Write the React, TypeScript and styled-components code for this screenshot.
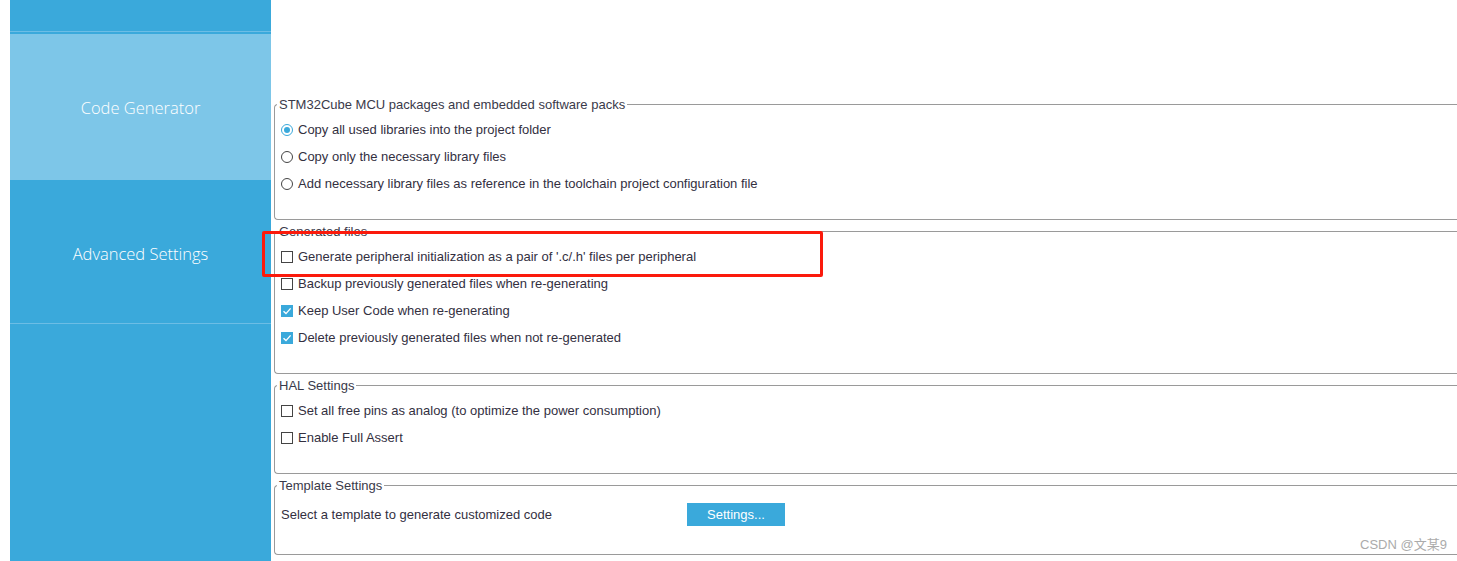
import React from "react";
import styled, { createGlobalStyle } from "styled-components";

const Global = createGlobalStyle`
  html, body { margin: 0; padding: 0; background: #fff; }
  body { font-family: "Liberation Sans", Arial, sans-serif; }
`;

const BLUE = "#3aa9db";
const LIGHT = "#7dc6e8";
const LINE = "#6cbde5";

const Page = styled.div`
  position: relative;
  display: flex;
  width: 1457px;
  height: 561px;
  padding-left: 10px;
  box-sizing: border-box;
  overflow: hidden;
  background: #fff;
`;

const Sidebar = styled.nav`
  width: 261px;
  flex: none;
  display: flex;
  flex-direction: column;
  background: ${BLUE};
`;

const NavItem = styled.div<{ $h: number; $active?: boolean; $line?: boolean; $gap?: number; $shift?: number }>`
  height: ${(p) => p.$h}px;
  flex: none;
  box-sizing: border-box;
  display: flex;
  align-items: center;
  justify-content: center;
  padding-top: ${(p) => p.$shift ?? 0}px;
  margin-bottom: ${(p) => p.$gap ?? 0}px;
  background: ${(p) => (p.$active ? LIGHT : BLUE)};
  border-bottom: ${(p) => (p.$line ? `1px solid ${LINE}` : "none")};
  color: #fff;
  font-family: "Open Sans", "Liberation Sans", Arial, sans-serif;
  font-size: 16.5px;
  font-weight: 300;
`;

const Main = styled.main`
  flex: 1;
  min-width: 0;
  padding: 95px 0 0 3px;
  display: flex;
  flex-direction: column;
  gap: 2px;
`;

const Group = styled.fieldset<{ $h: number }>`
  margin: 0;
  height: ${(p) => p.$h}px;
  box-sizing: border-box;
  border: 1px solid #9a9a9a;
  border-right: none;
  border-radius: 4px 0 0 4px;
  padding: 0 0 0 6px;
  min-width: 0;
`;

const Legend = styled.legend`
  margin-left: -4px;
  padding: 2px 2px 0;
  font-size: 13px;
  line-height: 16px;
  color: #3a3a4a;
`;

const Rows = styled.div<{ $top?: number }>`
  display: flex;
  flex-direction: column;
  padding-top: ${(p) => p.$top ?? 3}px;
`;

const Row = styled.label`
  height: 27px;
  display: flex;
  align-items: center;
  gap: 5px;
  font-size: 13px;
  color: #33303f;
  white-space: nowrap;
`;

const Radio = styled.span<{ $on?: boolean }>`
  width: 12px;
  height: 12px;
  box-sizing: border-box;
  border-radius: 50%;
  border: 1px solid ${(p) => (p.$on ? BLUE : "#444")};
  display: flex;
  align-items: center;
  justify-content: center;
  background: #fff;
  &::after {
    content: "";
    width: 6px;
    height: 6px;
    border-radius: 50%;
    background: ${(p) => (p.$on ? BLUE : "transparent")};
  }
`;

const Check = styled.span<{ $on?: boolean }>`
  width: 12px;
  height: 12px;
  box-sizing: border-box;
  border: 1px solid ${(p) => (p.$on ? BLUE : "#444")};
  background: ${(p) => (p.$on ? BLUE : "#fff")};
  display: flex;
  align-items: center;
  justify-content: center;
`;

const TemplateRow = styled.div`
  display: flex;
  align-items: center;
  height: 23px;
  font-size: 13px;
  color: #33303f;
`;

const TemplateLabel = styled.span`
  width: 406px;
  flex: none;
`;

const Button = styled.button`
  width: 98px;
  height: 23px;
  border: none;
  padding: 0;
  background: ${BLUE};
  color: #fff;
  font-family: "Liberation Sans", Arial, sans-serif;
  font-size: 13px;
`;

const Highlight = styled.div`
  position: absolute;
  left: 262px;
  top: 231px;
  width: 561px;
  height: 46px;
  box-sizing: border-box;
  border: 3px solid #fb1a0c;
  border-radius: 2px;
  pointer-events: none;
`;

const Watermark = styled.div`
  position: absolute;
  left: 1360px;
  top: 537px;
  font-family: "Liberation Sans", "Noto Sans CJK SC", sans-serif;
  font-size: 13px;
  line-height: 16px;
  color: #ababab;
`;

const Tick = () => (
  <svg width="10" height="10" viewBox="0 0 10 10">
    <path d="M1.5 5.2 L4 7.6 L8.6 2.4" fill="none" stroke="#fff" strokeWidth="1.4" />
  </svg>
);

type Opt = { label: string; on?: boolean };

const radios: Opt[] = [
  { label: "Copy all used libraries into the project folder", on: true },
  { label: "Copy only the necessary library files" },
  { label: "Add necessary library files as reference in the toolchain project configuration file" },
];

const generated: Opt[] = [
  { label: "Generate peripheral initialization as a pair of '.c/.h' files per peripheral" },
  { label: "Backup previously generated files when re-generating" },
  { label: "Keep User Code when re-generating", on: true },
  { label: "Delete previously generated files when not re-generated", on: true },
];

const hal: Opt[] = [
  { label: "Set all free pins as analog (to optimize the power consumption)" },
  { label: "Enable Full Assert" },
];

const CheckList = ({ items }: { items: Opt[] }) => (
  <Rows>
    {items.map((o) => (
      <Row key={o.label}>
        <Check $on={o.on}>{o.on && <Tick />}</Check>
        {o.label}
      </Row>
    ))}
  </Rows>
);

export default function App() {
  return (
    <>
      <Global />
      <Page>
        <Sidebar>
          <NavItem $h={32} $line $gap={2} />
          <NavItem $h={146} $active>
            Code Generator
          </NavItem>
          <NavItem $h={144} $line $shift={3}>
            Advanced Settings
          </NavItem>
        </Sidebar>
        <Main>
          <Group $h={125}>
            <Legend>STM32Cube MCU packages and embedded software packs</Legend>
            <Rows>
              {radios.map((o) => (
                <Row key={o.label}>
                  <Radio $on={o.on} />
                  {o.label}
                </Row>
              ))}
            </Rows>
          </Group>
          <Group $h={152}>
            <Legend>Generated files</Legend>
            <CheckList items={generated} />
          </Group>
          <Group $h={98}>
            <Legend>HAL Settings</Legend>
            <CheckList items={hal} />
          </Group>
          <Group $h={79}>
            <Legend>Template Settings</Legend>
            <Rows $top={9}>
              <TemplateRow>
                <TemplateLabel>Select a template to generate customized code</TemplateLabel>
                <Button>Settings...</Button>
              </TemplateRow>
            </Rows>
          </Group>
        </Main>
        <Highlight />
        <Watermark>CSDN @文某9</Watermark>
      </Page>
    </>
  );
}
